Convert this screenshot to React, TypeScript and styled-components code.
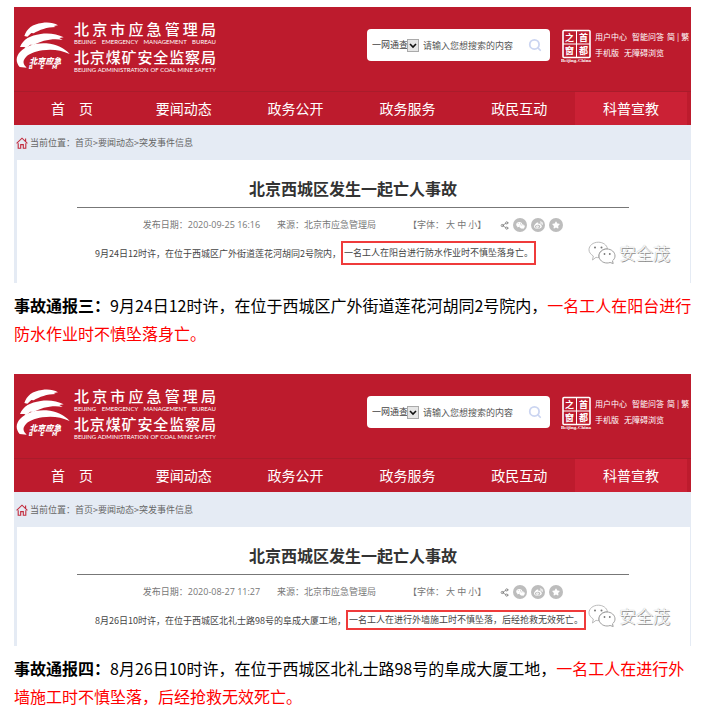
import React from "react";
import styled, { createGlobalStyle } from "styled-components";
import { Search, Share2 } from "lucide-react";
import { FaStar, FaWeibo, FaWeixin } from "react-icons/fa";

const sans = `"Noto Sans CJK SC", "Noto Sans", sans-serif`;
const red = "#bd1b2d";

const GlobalStyle = createGlobalStyle`
  * { box-sizing: border-box; }
  body { margin: 0; background: #fff; font-family: ${sans}; }
  button, input, select { font-family: inherit; }
  a { color: inherit; text-decoration: none; }
`;

const Page = styled.main`
  padding: 7px 16px 0 14px;
`;

const Report = styled.section`
  & + & { margin-top: 27px; }
`;

const Site = styled.article`
  margin-right: 7px;
  background: #e5ebf4;
`;

const Header = styled.header`
  display: flex;
  align-items: flex-start;
  height: 84px;
  background: ${red};
  color: #fff;
`;

const Logo = styled.svg`
  flex: none;
  width: 55px;
  height: 50px;
  margin: 13px 4px 0 1px;
`;

const Bureau = styled.div`
  flex: none;
  width: 142px;
  margin-top: 12px;
`;

const BureauName = styled.div`
  font-size: 15px;
  font-weight: 500;
  line-height: 20px;
  text-align: justify;
  text-align-last: justify;
`;

const BureauLatin = styled.div`
  height: 8px;
  font: 6px/6px Lato, "Liberation Sans", sans-serif;
  white-space: nowrap;
  text-align-last: justify;
`;

const SearchBox = styled.form`
  display: flex;
  align-items: center;
  flex: none;
  width: 183px;
  height: 32px;
  margin: 22px 11px 0 auto;
  padding: 0 8px 0 5px;
  border-radius: 4px;
  background: #fff;
`;

const ScopeWrap = styled.label`
  display: grid;
  grid-template-columns: 35px 12px;
  align-items: center;
  flex: none;
`;

const Scope = styled.select`
  grid-area: 1 / 1 / 2 / 3;
  appearance: none;
  width: 47px;
  height: 14px;
  padding: 0;
  border: 0;
  background: transparent;
  color: #444;
  font-size: 9px;
  line-height: 14px;
`;

const ScopeArrow = styled.svg`
  grid-area: 1 / 2;
  width: 12px;
  height: 13px;
  pointer-events: none;
`;

const Query = styled.input`
  flex: 1;
  min-width: 0;
  height: 16px;
  margin-left: 4px;
  padding: 0;
  border: 0;
  outline: 0;
  background: transparent;
  font-size: 9px;
  &::placeholder { color: #555; opacity: 1; }
`;

const PlainButton = styled.button`
  display: inline-flex;
  padding: 0;
  border: 0;
  background: transparent;
  color: inherit;
  font-size: inherit;
  line-height: inherit;
  cursor: pointer;
`;

const SearchButton = styled(PlainButton)`
  color: #cbd5f1;
`;

const Seal = styled.svg`
  flex: none;
  width: 32px;
  height: 34px;
  margin: 22px 2px 0 0;
`;

const Tools = styled.nav`
  flex: none;
  width: 96px;
  margin-top: 22px;
  font-size: 8px;
  line-height: 16px;
  white-space: nowrap;
`;

const ToolRow = styled.div`
  display: flex;
  gap: 5px;
`;

const Script = styled.span`
  display: flex;
  gap: 2px;
  margin-left: -2px;
`;

const Nav = styled.nav`
  display: grid;
  grid-template-columns: repeat(6, 1fr);
  height: 34px;
  padding: 0 4px 0 2px;
  border-top: 1px solid #a91c2b;
  background: ${red};
`;

const NavLink = styled.a<{ $active: boolean }>`
  background: ${(p) => (p.$active ? "#cb2135" : "transparent")};
  color: #fff;
  font-size: 14px;
  line-height: 33px;
  text-align: center;
  white-space: pre;
`;

const Crumbs = styled.nav`
  display: flex;
  align-items: center;
  gap: 2px;
  height: 35px;
  padding-left: 2px;
  color: #666;
  font-size: 9px;
  line-height: 12px;
`;

const HomeIcon = styled.svg`
  width: 12px;
  height: 12px;
`;

const Body = styled.div<{ $tall: boolean }>`
  position: relative;
  margin: 0 1px 0 3px;
  padding: 15px 61px ${(p) => (p.$tall ? 18 : 14)}px 60px;
  background: #fff;
`;

const Title = styled.h1`
  margin: 0;
  padding-bottom: 6px;
  border-bottom: 1px solid #777;
  color: #333;
  font-size: 16px;
  font-weight: 700;
  line-height: 26px;
  text-align: center;
`;

const Meta = styled.div`
  display: flex;
  justify-content: center;
  align-items: center;
  height: 16px;
  margin-top: 9px;
  color: #777;
  font-family: "Open Sans", ${sans};
  font-size: 9px;
  line-height: 16px;
  white-space: nowrap;
`;

const Source = styled.span`
  margin: 0 32px 0 17px;
`;

const Sizes = styled.span`
  display: flex;
  gap: 2px;
  margin-right: 14px;
`;

const Shares = styled.span`
  display: flex;
  align-items: center;
  gap: 4px;
`;

const ShareButton = styled(PlainButton)`
  align-items: center;
  justify-content: center;
  width: 14px;
  height: 14px;
  border-radius: 50%;
  background: #bdbdbd;
  color: #fff;
`;

const Notice = styled.p`
  display: flex;
  align-items: center;
  height: 24px;
  margin: 8px 0 0;
  padding-left: 18px;
  color: #444;
  font-size: 9px;
  white-space: nowrap;
`;

const Boxed = styled.span<{ $tall: boolean }>`
  height: ${(p) => (p.$tall ? 24 : 20)}px;
  line-height: ${(p) => (p.$tall ? 20 : 16)}px;
  padding: 0 1px;
  border: 2px solid #ef3b3b;
`;

const Watermark = styled.div`
  position: absolute;
  right: 20px;
  bottom: 17px;
  display: flex;
  align-items: center;
  gap: 3px;
  color: #fff;
  font-size: 17px;
  font-weight: 300;
  line-height: 26px;
  text-shadow: 1px 1px 0 #8c8c8c, 0 0 1px #999;
`;

const WatermarkIcon = styled.svg`
  width: 28px;
  height: 24px;
`;

const Caption = styled.p`
  margin: 8px 0 0;
  color: #000;
  font-size: 16px;
  line-height: 28px;
`;

const Alert = styled.span`
  color: #f00;
`;

const navItems = ["首　页", "要闻动态", "政务公开", "政务服务", "政民互动", "科普宣教"];

type Entry = {
  label: string;
  date: string;
  lead: string;
  alert: string;
  tall: boolean;
};

const entries: Entry[] = [
  {
    label: "事故通报三：",
    date: "2020-09-25 16:16",
    lead: "9月24日12时许，在位于西城区广外街道莲花河胡同2号院内，",
    alert: "一名工人在阳台进行防水作业时不慎坠落身亡。",
    tall: true,
  },
  {
    label: "事故通报四：",
    date: "2020-08-27 11:27",
    lead: "8月26日10时许，在位于西城区北礼士路98号的阜成大厦工地，",
    alert: "一名工人在进行外墙施工时不慎坠落，后经抢救无效死亡。",
    tall: false,
  },
];

function BureauLogo() {
  return (
    <Logo viewBox="45 60 165 150" fill="#fff" aria-hidden="true">
      <path d="M73 108 C80 86 98 72 126 69 C145 66 162 69 174 76 L161 78 L167 81 C141 81 118 90 101 100 L94 99 L82 110Z" />
      <path d="M60 141 C69 118 91 106 122 102 C149 98 172 103 191 112 L178 114 L188 120 C157 114 125 122 101 135 L91 134 L78 145 L73 141Z" />
      <path d="M59 201 C47 187 47 170 60 156 C78 137 107 128 139 130 C170 132 193 145 209 162 C183 150 155 146 127 151 C103 155 84 162 75 175 C68 184 69 193 80 203Z" />
      <g fontFamily="Noto Sans CJK SC, sans-serif" fontStyle="italic" fontWeight="900">
        <text x="88" y="192" fontSize="24">北京应急</text>
        <g fontSize="16" fontFamily="DejaVu Sans, sans-serif">
          <text x="86" y="207">B</text>
          <text x="121" y="207">E</text>
          <text x="156" y="207">M</text>
        </g>
      </g>
    </Logo>
  );
}

function CapitalSeal() {
  return (
    <Seal viewBox="0 0 32 34" fill="#fff" role="img" aria-label="首都之窗">
      <rect x="2" y="1.5" width="27" height="27" rx="1" fill="none" stroke="#fff" strokeWidth="1.6" />
      <path d="M15 1h1v28h-1zM2 14.500h27v1H2z" />
      <g fontFamily="Noto Sans CJK SC, sans-serif" fontWeight="700" fontSize="9">
        <text x="4" y="12">之</text>
        <text x="18" y="12">首</text>
        <text x="4" y="25">窗</text>
        <text x="18" y="25">都</text>
      </g>
      <text x="0" y="33" fontFamily="Liberation Serif, serif" fontWeight="700" fontSize="5">Beijing-China</text>
    </Seal>
  );
}

function SiteHeader() {
  return (
    <Header>
      <BureauLogo />
      <Bureau>
        <BureauName>北京市应急管理局</BureauName>
        <BureauLatin>BEIJING EMERGENCY MANAGEMENT BUREAU</BureauLatin>
        <BureauName>北京煤矿安全监察局</BureauName>
        <BureauLatin>BEIJING ADMINISTRATION OF COAL MINE SAFETY</BureauLatin>
      </Bureau>
      <SearchBox onSubmit={(e) => e.preventDefault()}>
        <ScopeWrap>
          <Scope aria-label="搜索范围">
            <option>一网通查</option>
          </Scope>
          <ScopeArrow viewBox="0 0 12 13" fill="none">
            <rect x=".5" y=".5" width="11" height="12" fill="#e6e6e6" stroke="#aaa" />
            <path d="M3 5l3 3 3-3" stroke="#111" strokeWidth="1.6" />
          </ScopeArrow>
        </ScopeWrap>
        <Query aria-label="搜索内容" placeholder="请输入您想搜索的内容" />
        <SearchButton aria-label="搜索">
          <Search size={14} strokeWidth={3} />
        </SearchButton>
      </SearchBox>
      <CapitalSeal />
      <Tools>
        <ToolRow>
          <a href="#user">用户中心</a>
          <a href="#ask">智能问答</a>
          <Script>
            <a href="#jian">简</a>
            <span>|</span>
            <a href="#fan">繁</a>
          </Script>
        </ToolRow>
        <ToolRow>
          <a href="#mobile">手机版</a>
          <a href="#access">无障碍浏览</a>
        </ToolRow>
      </Tools>
    </Header>
  );
}

function SiteCard({ entry }: { entry: Entry }) {
  return (
    <Site>
      <SiteHeader />
      <Nav>
        {navItems.map((item, i) => (
          <NavLink key={item} href="#nav" $active={i === navItems.length - 1}>
            {item}
          </NavLink>
        ))}
      </Nav>
      <Crumbs>
        <HomeIcon viewBox="0 0 12 12" fill="none" stroke="#c32c3e" strokeWidth="1.1">
          <path d="M.6 6.3L6 1.2l5.4 5.1M9.6 4.4V1.6M2.2 6.2v5h2.5V7.6h2.6v3.6h2.5v-5" />
        </HomeIcon>
        <span>
          当前位置：<a href="#home">首页</a>&gt;<a href="#news">要闻动态</a>&gt;<a href="#events">突发事件信息</a>
        </span>
      </Crumbs>
      <Body $tall={entry.tall}>
        <Title>北京西城区发生一起亡人事故</Title>
        <Meta>
          <span>发布日期：{entry.date}</span>
          <Source>来源：北京市应急管理局</Source>
          <Sizes>
            <span>【字体：</span>
            <PlainButton>大</PlainButton>
            <PlainButton>中</PlainButton>
            <span><PlainButton>小</PlainButton>】</span>
          </Sizes>
          <Shares>
            <Share2 size={9} />
            <ShareButton aria-label="微信"><FaWeixin size={9} /></ShareButton>
            <ShareButton aria-label="微博"><FaWeibo size={9} /></ShareButton>
            <ShareButton aria-label="QQ空间"><FaStar size={8} /></ShareButton>
          </Shares>
        </Meta>
        <Notice>
          {entry.lead}
          <Boxed $tall={entry.tall}>{entry.alert}</Boxed>
        </Notice>
        <Watermark>
          <WatermarkIcon viewBox="0 0 28 24" fill="#fff" stroke="#aaa" strokeWidth=".8">
            <path d="M4.5 19l.8-4C2.500 13.200 1 11.200 1 8.700 1 4.500 5.200 1.200 10.300 1.200c4.700 0 8.500 2.700 9.200 6.500-5 0-8.700 3.300-8.700 7.300 0 .6.100 1.200.200 1.700-1 0-2-.1-3-.4z" />
            <path d="M25.200 22.500l-.7-2.700c1.500-1.200 2.500-2.900 2.500-4.800 0-3.900-3.600-7-8-7s-8 3.100-8 7 3.600 7 8 7c1.100 0 2.100-.2 3.100-.5z" stroke="#888" />
            <g fill="#777" stroke="none">
              <circle cx="7" cy="6.500" r="1" />
              <circle cx="13.500" cy="6.500" r="1" />
              <circle cx="16.500" cy="13" r=".9" />
              <circle cx="21.800" cy="13" r=".9" />
            </g>
          </WatermarkIcon>
          安全茂
        </Watermark>
      </Body>
    </Site>
  );
}

export default function App() {
  return (
    <Page>
      <GlobalStyle />
      {entries.map((entry) => (
        <Report key={entry.label}>
          <SiteCard entry={entry} />
          <Caption>
            <strong>{entry.label}</strong>
            {entry.lead}
            <Alert>{entry.alert}</Alert>
          </Caption>
        </Report>
      ))}
    </Page>
  );
}
